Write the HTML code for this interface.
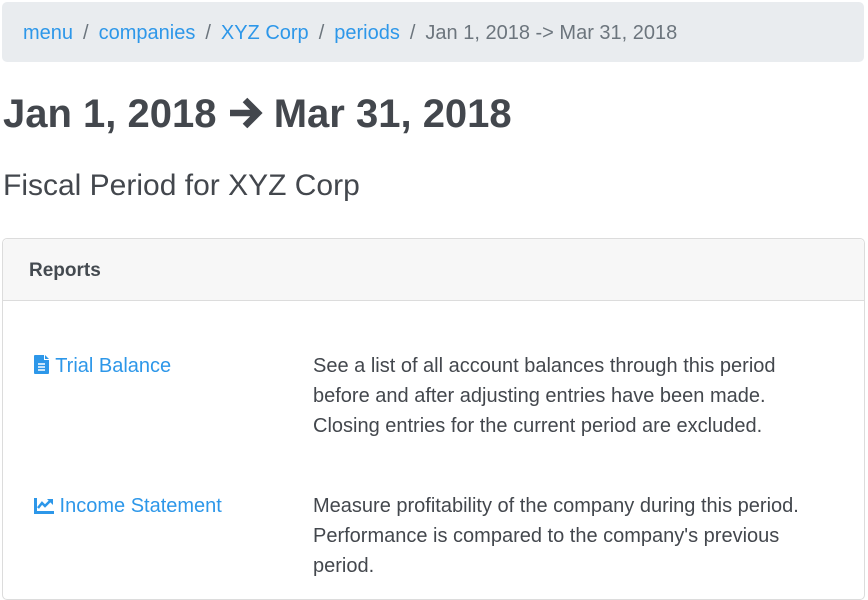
<!DOCTYPE html>
<html><head><style>
body{margin:0;font-family:"Liberation Sans",sans-serif;color:#444a50;background:#fff;width:868px;height:584px;overflow:hidden;position:relative}
.bc{position:absolute;left:2px;top:2px;width:862px;height:60px;background:#e9ecef;border-radius:5px;font-size:20px;line-height:63px;color:#6c757d}
.bc span.a{color:#2d97e9}
.bc .s{padding:0 10px;color:#6c757d}
h1{position:absolute;left:3px;top:92px;margin:0;font-size:40px;font-weight:bold;line-height:44px;color:#43474d}
.sub{position:absolute;left:3px;top:169px;font-size:30px;line-height:34px;color:#43474d}
.card{position:absolute;left:2px;top:238px;width:861px;height:360px;border:1px solid #dcdcdc;border-radius:5px}
.ch{height:61px;background:#f7f7f7;border-bottom:1px solid #dcdcdc;font-weight:bold;font-size:19px;line-height:63px;padding-left:26px;border-radius:5px 5px 0 0}
.l{position:absolute;left:31px;font-size:20px;color:#2d97e9;line-height:30px}
.d{position:absolute;left:310px;font-size:20px;line-height:30px;color:#43474d;width:490px}
svg{vertical-align:-2px}
</style></head><body>
<div class="bc"><span style="padding-left:21px" class="a">menu</span><span class="s">/</span><span class="a">companies</span><span class="s">/</span><span class="a">XYZ Corp</span><span class="s">/</span><span class="a">periods</span><span class="s">/</span>Jan 1, 2018 -&gt; Mar 31, 2018</div>
<h1>Jan 1, 2018 <svg width="35" height="34" viewBox="0 0 35 34" style="vertical-align:-3px"><path d="M2 17H29M17 4L30 17L17 30" stroke="#43474d" stroke-width="6.5" fill="none" stroke-linejoin="miter"/></svg> Mar 31, 2018</h1>
<div class="sub">Fiscal Period for XYZ Corp</div>
<div class="card"><div class="ch">Reports</div>
<div class="l" style="top:112px"><svg width="16" height="19" viewBox="0 0 16 19"><path d="M0 1Q0 0 1 0H10V5H15V18Q15 19 14 19H1Q0 19 0 18Z" fill="#2d97e9"/><path d="M11 0L15 4H11Z" fill="#2d97e9"/><path d="M4 9H11M4 12H11M4 15H11" stroke="#fff" stroke-width="1.5"/></svg> Trial Balance</div>
<div class="d" style="top:112px">See a list of all account balances through this period before and after adjusting entries have been made. Closing entries for the current period are excluded.</div>
<div class="l" style="top:252px"><svg width="20" height="17" viewBox="0 0 20 17"><path d="M1.5 1V15.5H20" stroke="#2d97e9" stroke-width="3" fill="none"/><path d="M4 11L8 6L11 9L16 4" stroke="#2d97e9" stroke-width="2.5" fill="none"/><path d="M13 2H19V8Z" fill="#2d97e9"/></svg> Income Statement</div>
<div class="d" style="top:252px">Measure profitability of the company during this period. Performance is compared to the company's previous period.</div>
</div>
</body></html>
